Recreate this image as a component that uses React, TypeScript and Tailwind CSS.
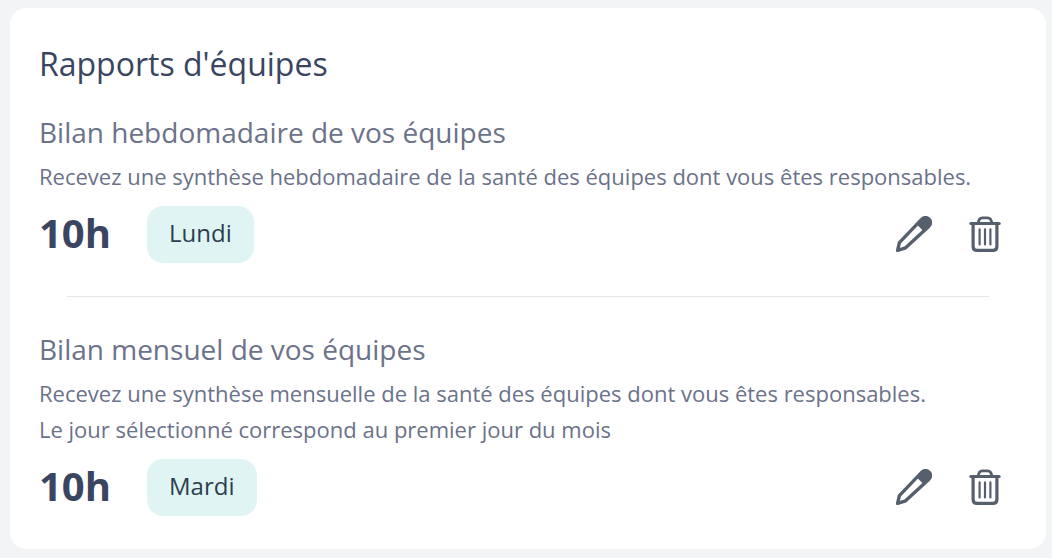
type Report = {
  title: string;
  description: string[];
  hour: string;
  day: string;
};

const reports: Report[] = [
  {
    title: "Bilan hebdomadaire de vos équipes",
    description: ["Recevez une synthèse hebdomadaire de la santé des équipes dont vous êtes responsables."],
    hour: "10h",
    day: "Lundi",
  },
  {
    title: "Bilan mensuel de vos équipes",
    description: [
      "Recevez une synthèse mensuelle de la santé des équipes dont vous êtes responsables.",
      "Le jour sélectionné correspond au premier jour du mois",
    ],
    hour: "10h",
    day: "Mardi",
  },
];

function PencilIcon() {
  return (
    <svg className="size-9" viewBox="0 0 36 36" fill="none" aria-hidden="true">
      <path
        d="M1.6 34.4 3.4 26.6 25.6 3.4C28 1 31 1 33 3.2c2 2.2 1.9 5-.3 7.2L9.6 31.8Z"
        stroke="currentColor"
        strokeWidth="3.4"
        strokeLinejoin="round"
      />
      <path d="M25.8 3.6C28 1.2 31 1 33 3.2c2 2.2 1.9 5-.3 7.2l-5.2 4.8-6.6-6.6Z" fill="currentColor" />
    </svg>
  );
}

function TrashIcon() {
  return (
    <svg className="size-9" viewBox="0 0 36 36" fill="none" stroke="currentColor" strokeLinecap="round" aria-hidden="true">
      <path d="M3.8 7.4h28.4" strokeWidth="3" />
      <path d="M11.2 6.8c.5-3.2 1.7-5 4-5h5.6c2.3 0 3.5 1.8 4 5" strokeWidth="2.8" />
      <path d="M6.1 8v22.4c0 2.5 1.6 4 4 4h15.8c2.4 0 4-1.5 4-4V8" strokeWidth="3.2" />
      <path d="M12.6 13.4v15M18 13.4v15M23.4 13.4v15" strokeWidth="2.2" />
    </svg>
  );
}

function ReportItem({ report }: { report: Report }) {
  return (
    <article>
      <h3 className="text-[28px] leading-10">{report.title}</h3>
      <div className="mt-[6px] text-[22px] leading-9">
        {report.description.map((line) => (
          <p key={line}>{line}</p>
        ))}
      </div>
      <div className="mt-3 flex items-start justify-between">
        <div className="flex items-start gap-9">
          <span className="text-[40px] leading-[53px] font-bold text-[#3a4562]">{report.hour}</span>
          <span className="rounded-2xl bg-[#dff4f3] px-[22px] pb-1 text-2xl leading-[53px] text-[#2c3e50]">{report.day}</span>
        </div>
        <div className="mt-[2px] mr-[6px] flex items-center gap-[19px] text-[#56606d]">
          <button type="button" aria-label="Modifier" className="p-2">
            <PencilIcon />
          </button>
          <button type="button" aria-label="Supprimer" className="p-2">
            <TrashIcon />
          </button>
        </div>
      </div>
    </article>
  );
}

export default function App() {
  return (
    <main className="min-h-screen bg-[#f3f4f6] pt-2 pr-[6px] pb-[9px] pl-[10px] font-['Open_Sans','Noto_Sans',sans-serif] text-[#6b7289]">
      <section className="rounded-2xl bg-white px-[29px] pt-9 pb-[33px]">
        <h2 className="mb-7 text-[32px] leading-10 text-[#3a4562]">Rapports d'équipes</h2>
        {reports.map((report, index) => (
          <div key={report.title}>
            {index > 0 && <hr className="mx-7 mt-[33px] mb-8 border-[#e5e7eb]" />}
            <ReportItem report={report} />
          </div>
        ))}
      </section>
    </main>
  );
}
